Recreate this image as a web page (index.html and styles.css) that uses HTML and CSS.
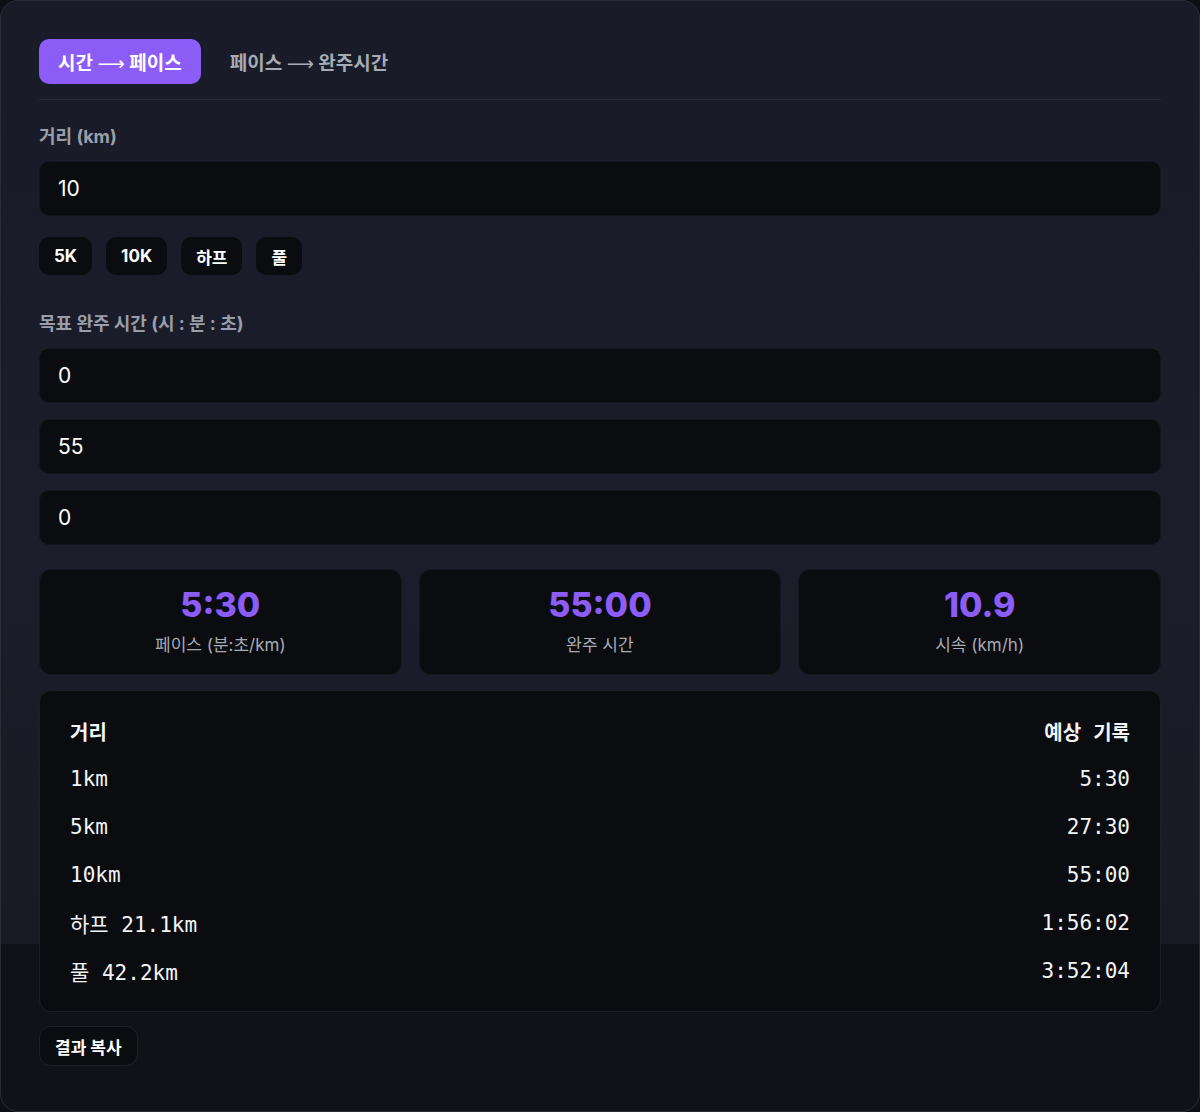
FILE: index.html
```html
<!DOCTYPE html>
<html lang="ko">
<head>
  <meta charset="UTF-8" />
  <meta name="viewport" content="width=device-width, initial-scale=1.0"/>
  <title>페이스 계산기</title>
  <link rel="stylesheet" href="styles.css">
</head>
<body>
  <div class="card">
    <!-- 모드 탭 -->
    <div class="tabs">
      <button class="tab active">시간 <span class="arrow">⟶</span> 페이스</button>
      <button class="tab">페이스 <span class="arrow">⟶</span> 완주시간</button>
    </div>

    <label class="field-label">거리 (km)</label>
    <input class="field" type="text" value="10">
    <div class="chips">
      <button class="chip">5K</button>
      <button class="chip">10K</button>
      <button class="chip">하프</button>
      <button class="chip">풀</button>
    </div>

    <label class="field-label">목표 완주 시간 (시 : 분 : 초)</label>
    <div class="time-inputs">
      <input class="field" type="text" value="0">
      <input class="field" type="text" value="55">
      <input class="field" type="text" value="0">
    </div>

    <!-- 결과 -->
    <div class="stats">
      <div class="stat"><div class="stat-value">5:30</div><div class="stat-label">페이스 (분:초/km)</div></div>
      <div class="stat"><div class="stat-value">55:00</div><div class="stat-label">완주 시간</div></div>
      <div class="stat"><div class="stat-value">10.9</div><div class="stat-label">시속 (km/h)</div></div>
    </div>

    <div class="table-box">
      <table>
        <thead>
          <tr><th>거리</th><th class="right">예상 기록</th></tr>
        </thead>
        <tbody>
          <tr><td>1km</td><td class="right">5:30</td></tr>
          <tr><td>5km</td><td class="right">27:30</td></tr>
          <tr><td>10km</td><td class="right">55:00</td></tr>
          <tr><td>하프 21.1km</td><td class="right">1:56:02</td></tr>
          <tr><td>풀 42.2km</td><td class="right">3:52:04</td></tr>
        </tbody>
      </table>
    </div>

    <button class="copy-btn">결과 복사</button>
  </div>
</body>
</html>
```

FILE: styles.css
```css
body { margin: 0; background: #0e0f14; font-family: Inter, "Noto Sans CJK KR", sans-serif; color: #f3f4f6; }
.card { height: 1112px; box-sizing: border-box; border: 1px solid #2a2d38; border-radius: 18px; padding: 38px 38px 0; background-color: #111217; background-image: linear-gradient(180deg, #191c28 0%, #1b1d2a 60%, #1a1a26 100%); background-size: 100% 943px; background-repeat: no-repeat; display: flex; flex-direction: column; }

.tabs { display: flex; gap: 11px; padding-bottom: 15px; border-bottom: 1px solid #272b37; margin-bottom: 26px; }
.tab { font-family: inherit; font-size: 19px; font-weight: 700; border: none; background: none; color: #a7abb6; padding: 0 18px; height: 45px; border-radius: 10px; }
.tab.active { background: #8b5cf6; color: #fff; padding: 0 19px; }
.arrow { font-family: "DejaVu Sans", sans-serif; font-weight: 400; }

.field-label { font-size: 18px; font-weight: 700; color: #9a9eaa; margin-bottom: 13px; line-height: 22px; }
.field { display: block; width: 100%; box-sizing: border-box; height: 55px; background: #0b0c10; border: 1px solid #14161c; border-radius: 10px; color: #fff; font-family: inherit; font-size: 21px; padding: 0 18px; outline: none; }

.chips { display: flex; gap: 14px; margin: 21px 0 38px; }
.chip { font-family: inherit; font-size: 17px; font-weight: 700; color: #fff; background: #0b0c10; border: none; border-radius: 10px; height: 38px; padding: 0 15px; }

.time-inputs { display: flex; flex-direction: column; gap: 16px; }

.stats { display: grid; grid-template-columns: repeat(3, 1fr); gap: 17px; margin-top: 24px; }
.stat { background: #0b0c10; border: 1px solid #15171d; border-radius: 12px; height: 106px; box-sizing: border-box; padding-top: 15px; text-align: center; }
.stat-value { font-size: 34px; font-weight: 800; color: #8b5cf6; line-height: 40px; }
.stat-label { font-size: 17px; color: #a8abb5; margin-top: 9px; line-height: 22px; }

.table-box { margin-top: 15px; background: #0b0c10; border: 1px solid #1d1f27; border-radius: 12px; padding: 16px 30px; }
table { width: 100%; border-collapse: collapse; font-family: "DejaVu Sans Mono", "Noto Sans CJK KR", monospace; font-size: 21px; color: #f3f4f6; }
th, td { height: 48px; padding: 0; text-align: left; }
th { font-weight: 700; font-size: 20px; }
.right { text-align: right; }

.copy-btn { align-self: flex-start; margin-top: 14px; font-family: inherit; font-size: 17px; font-weight: 700; color: #fff; background: #0b0c10; border: 1px solid #1f2129; border-radius: 12px; height: 40px; padding: 0 15px; }
```
